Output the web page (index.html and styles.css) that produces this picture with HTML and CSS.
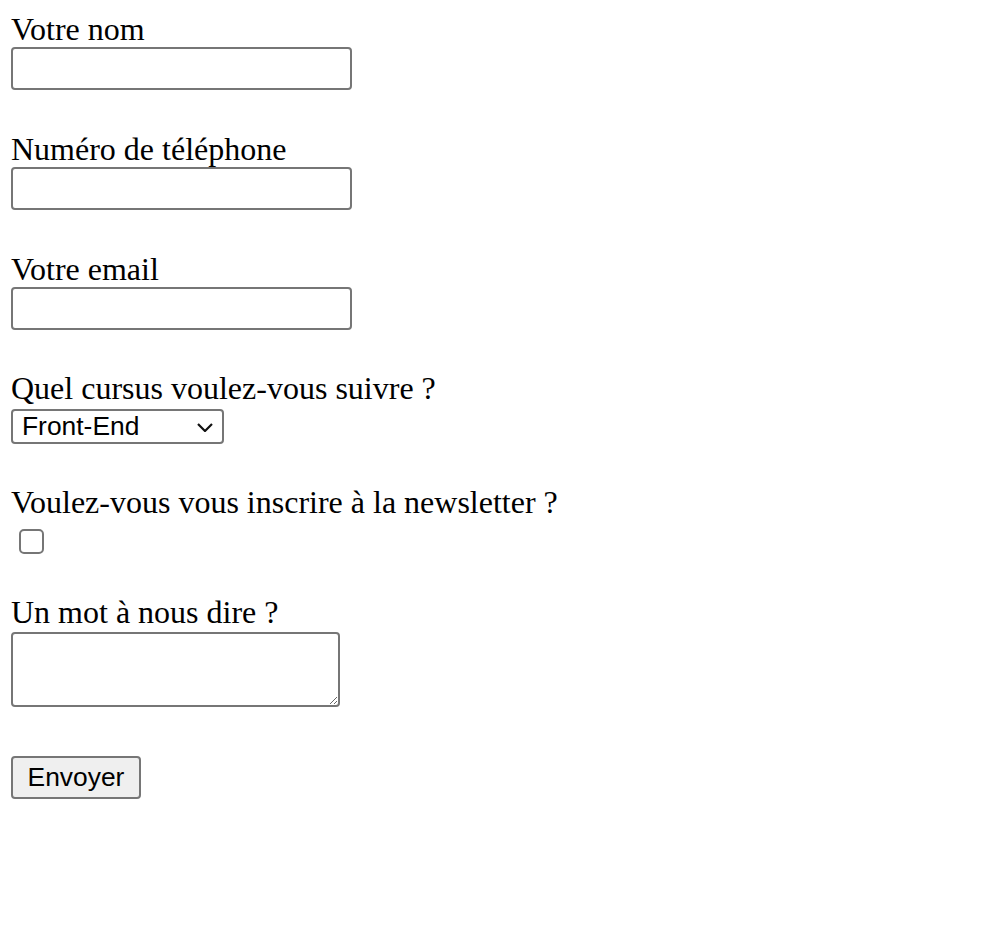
FILE: index.html
```html
<!DOCTYPE html>
<html lang="fr">
<head>
<meta charset="utf-8">
<title>Formulaire</title>
<link rel="stylesheet" href="styles.css">
</head>
<body>
<form class="form">
  <div class="field field-text">
    <label class="label" for="nom">Votre nom</label>
    <input class="input" type="text" id="nom">
  </div>
  <div class="field field-text">
    <label class="label" for="tel">Numéro de téléphone</label>
    <input class="input" type="tel" id="tel">
  </div>
  <div class="field field-text field-last">
    <label class="label" for="email">Votre email</label>
    <input class="input" type="email" id="email">
  </div>
  <div class="field field-select">
    <label class="label" for="cursus">Quel cursus voulez-vous suivre ?</label>
    <div class="select-wrap">
      <select class="select" id="cursus">
        <option>Front-End</option>
        <option>Back-End</option>
      </select>
      <svg class="chevron" width="16" height="9" viewBox="0 0 16 9"><polyline points="1,1 8,8 15,1" fill="none" stroke="#111" stroke-width="2.2"/></svg>
    </div>
  </div>
  <div class="field field-check">
    <label class="label" for="news">Voulez-vous vous inscrire à la newsletter ?</label>
    <input class="check" type="checkbox" id="news">
  </div>
  <div class="field field-area">
    <label class="label" for="msg">Un mot à nous dire ?</label>
    <textarea class="area" id="msg"></textarea>
  </div>
  <button class="button" type="submit">Envoyer</button>
</form>
</body>
</html>
```
FILE: styles.css
```css
html, body {
  margin: 0;
  padding: 0;
  background: #ffffff;
}

.form {
  display: flex;
  flex-direction: column;
  align-items: flex-start;
  padding: 11px 0 0 11px;
}

.field {
  display: flex;
  flex-direction: column;
  align-items: flex-start;
}

.label {
  display: block;
  font-family: "Liberation Serif", "Times New Roman", serif;
  font-size: 32px;
  line-height: 36px;
  color: #000;
  white-space: nowrap;
}

.field-text { margin-bottom: 41px; }
.field-last { margin-bottom: 40px; }
.field-select { margin-bottom: 40px; }
.field-check { margin-bottom: 40px; }
.field-area { margin-bottom: 49px; }

.input {
  display: block;
  box-sizing: border-box;
  width: 341px;
  height: 43px;
  margin: 0;
  padding: 0 4px;
  border: 2px solid #767676;
  border-radius: 4px;
  background: #fff;
  font-family: "Liberation Sans", Arial, sans-serif;
  font-size: 26px;
  outline: none;
}

.select-wrap {
  position: relative;
  margin-top: 3px;
  width: 213px;
  height: 35px;
}

.select {
  -webkit-appearance: none;
  appearance: none;
  display: block;
  box-sizing: border-box;
  width: 213px;
  height: 35px;
  margin: 0;
  padding: 0 0 0 9px;
  border: 2px solid #767676;
  border-radius: 4px;
  background: #fff;
  color: #000;
  font-family: "Liberation Sans", Arial, sans-serif;
  font-size: 26.4px;
  line-height: 31px;
  outline: none;
}

.chevron {
  position: absolute;
  left: 186px;
  top: 14px;
  pointer-events: none;
}

.check {
  -webkit-appearance: none;
  appearance: none;
  display: block;
  box-sizing: border-box;
  width: 25px;
  height: 25px;
  margin: 9px 0 0 8px;
  border: 2px solid #767676;
  border-radius: 5px;
  background: #fff;
}

.area {
  display: block;
  box-sizing: border-box;
  width: 329px;
  height: 75px;
  margin: 2px 0 0 0;
  padding: 2px;
  border: 2px solid #767676;
  border-radius: 4px;
  background: #fff;
  font-family: "Liberation Mono", monospace;
  font-size: 26px;
  outline: none;
}

.button {
  display: block;
  box-sizing: border-box;
  width: 130px;
  height: 43px;
  margin: 0;
  padding: 0;
  border: 2px solid #767676;
  border-radius: 4px;
  background: #efefef;
  color: #000;
  font-family: "Liberation Sans", Arial, sans-serif;
  font-size: 26.4px;
  line-height: 39px;
  text-align: center;
}
```
